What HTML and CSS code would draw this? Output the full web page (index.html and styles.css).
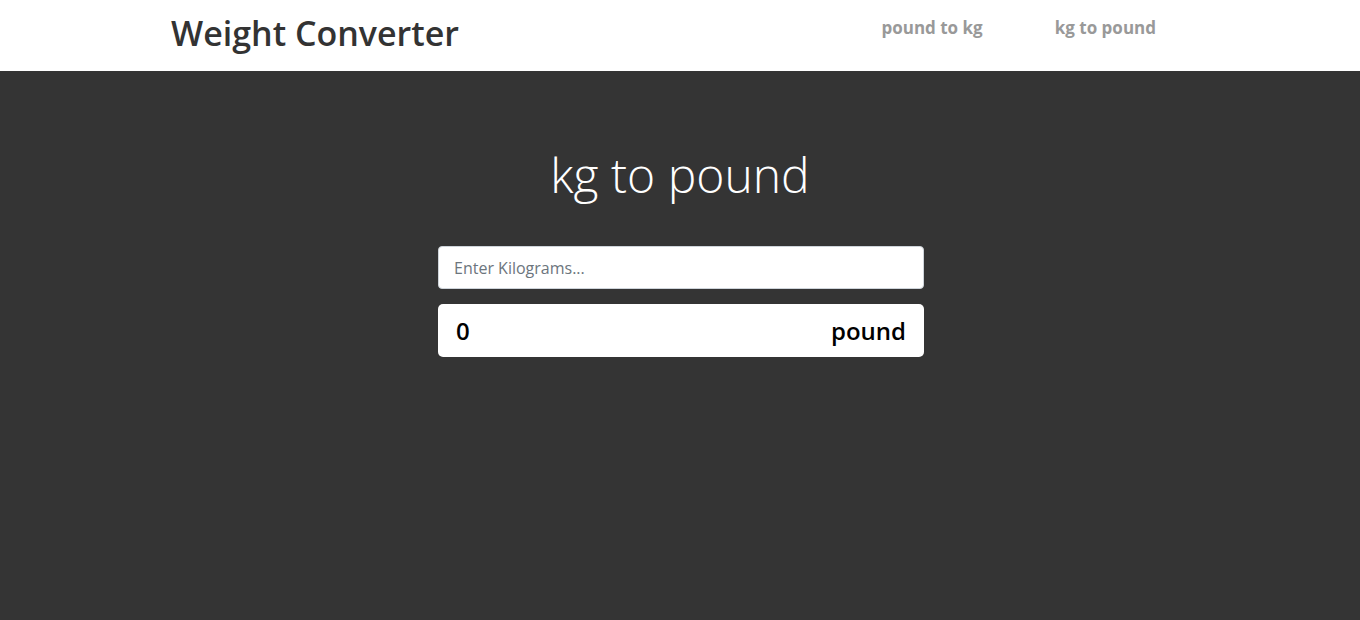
FILE: index.html
```html
<!DOCTYPE html>
<html lang="en">
<head>
<meta charset="utf-8">
<title>Weight Converter</title>
<link rel="stylesheet" href="styles.css">
</head>
<body>
<header class="navbar">
  <div class="nav-inner">
    <div class="brand">Weight Converter</div>
    <nav class="links">
      <a href="#" class="link">pound to kg</a>
      <a href="#" class="link">kg to pound</a>
    </nav>
  </div>
</header>
<main class="main">
  <h1 class="title">kg to pound</h1>
  <div class="form">
    <input class="field" type="text" placeholder="Enter Kilograms...">
    <div class="result">
      <span class="value">0</span>
      <span class="unit">pound</span>
    </div>
  </div>
</main>
</body>
</html>
```
FILE: styles.css
```css
* { box-sizing: border-box; }
html, body { height: 100%; }
body {
  margin: 0;
  background: #343434;
  font-family: "Open Sans", "Noto Sans", sans-serif;
  display: flex;
  flex-direction: column;
}
.navbar {
  background: #fff;
  height: 71px;
}
.nav-inner {
  width: 1018px;
  margin: 0 auto;
  height: 100%;
  display: flex;
  align-items: flex-start;
  justify-content: space-between;
}
.brand {
  font-size: 34px;
  font-weight: 600;
  color: #333;
  margin-top: 10px;
  line-height: 46px;
}
.links {
  display: flex;
  gap: 72px;
  margin-top: 16px;
  margin-right: 33px;
}
.link {
  font-size: 17px;
  font-weight: 700;
  color: #999;
  text-decoration: none;
  line-height: 24px;
}
.main {
  flex: 1;
  display: flex;
  flex-direction: column;
  align-items: center;
}
.title {
  margin: 72px 0 0;
  font-size: 48px;
  font-weight: 300;
  color: #fff;
  line-height: 64px;
}
.form {
  width: 486px;
  margin-top: 39px;
  margin-left: 2px;
  display: flex;
  flex-direction: column;
  gap: 15px;
}
.field {
  height: 43px;
  border: 1px solid #ced4da;
  border-radius: 4px;
  padding: 0 15px;
  font-family: inherit;
  font-size: 16px;
  color: #495057;
  background: #fff;
}
.field::placeholder { color: #6c757d; }
.result {
  height: 53px;
  background: #fff;
  border-radius: 5px;
  display: flex;
  justify-content: space-between;
  align-items: center;
  padding: 0 18px;
  font-size: 24px;
  font-weight: 600;
  color: #000;
}
```
